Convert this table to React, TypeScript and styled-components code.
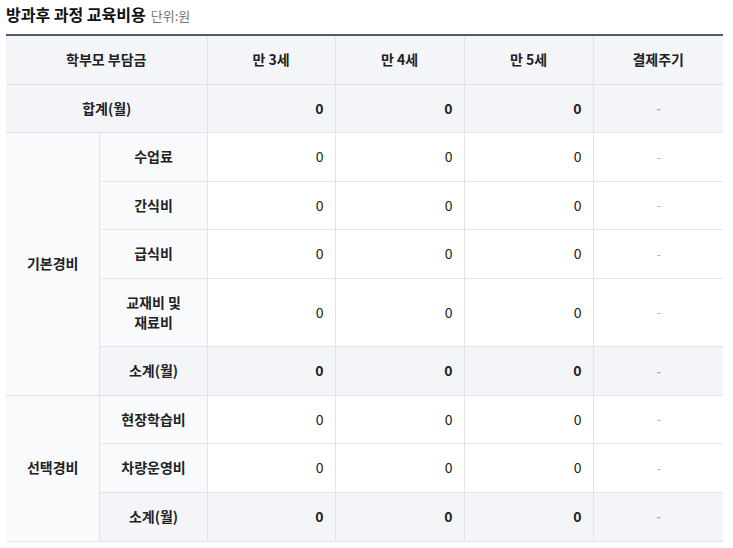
import React from "react";
import styled, { createGlobalStyle } from "styled-components";

const Global = createGlobalStyle`
  body {
    margin: 0;
    background: #fff;
    font-family: "Noto Sans CJK KR", "Noto Sans", sans-serif;
    color: #222;
  }
`;

const Wrap = styled.div`
  padding: 3px 10px 0 6px;
  width: 717px;
`;

const Title = styled.h3`
  margin: 0 0 7px;
  font-size: 16px;
  line-height: 23px;
  font-weight: 700;
  color: #111;
  display: flex;
  align-items: baseline;
  gap: 5px;
`;

const Unit = styled.span`
  font-size: 13px;
  font-weight: 400;
  color: #777;
`;

const Table = styled.table`
  width: 717px;
  border-collapse: collapse;
  table-layout: fixed;
  border-top: 2px solid #555c66;
  font-size: 14px;
  line-height: 1.4;
`;

const Th = styled.th`
  background: #f4f5f9;
  font-weight: 700;
  color: #222;
  padding: 14px 10px;
  height: 48px;
  box-sizing: border-box;
  border-bottom: 1px solid #e3e4e8;
  border-left: 1px solid #e3e4e8;
  &:first-child { border-left: none; }
`;

const Cell = styled.td<{ $variant?: "group" | "label" | "num" | "dash"; $sum?: boolean }>`
  padding: 14px 11px 14px 12px;
  border-bottom: 1px solid #e3e4e8;
  border-left: 1px solid #e3e4e8;
  background: ${(p) =>
    p.$sum ? "#f4f5f8" : p.$variant === "group" || p.$variant === "label" ? "#f9fafc" : "#fff"};
  text-align: ${(p) => (p.$variant === "num" ? "right" : "center")};
  font-weight: ${(p) =>
    p.$variant === "group" || p.$variant === "label" || p.$sum ? 700 : 400};
  color: ${(p) => (p.$variant === "dash" ? "#aaa" : "#222")};
  font-size: ${(p) => (p.$variant === "dash" ? "12px" : "14px")};
  ${(p) => (p.$variant === "group" ? "border-left: none;" : "")}
`;

type Row = { label: string; sum?: boolean };

const groups: { name: string; rows: Row[] }[] = [
  {
    name: "기본경비",
    rows: [
      { label: "수업료" },
      { label: "간식비" },
      { label: "급식비" },
      { label: "교재비 및\n재료비" },
      { label: "소계(월)", sum: true },
    ],
  },
  {
    name: "선택경비",
    rows: [
      { label: "현장학습비" },
      { label: "차량운영비" },
      { label: "소계(월)", sum: true },
    ],
  },
];

const Label = styled.span`
  display: inline-block;
  white-space: pre-line;
`;

export default function App() {
  return (
    <>
      <Global />
      <Wrap>
        <Title>
          방과후 과정 교육비용 <Unit>단위:원</Unit>
        </Title>
        <Table>
          <colgroup>
            <col style={{ width: 93 }} />
            <col style={{ width: 108 }} />
            <col style={{ width: 128 }} />
            <col style={{ width: 129 }} />
            <col style={{ width: 129 }} />
            <col style={{ width: 130 }} />
          </colgroup>
          <thead>
            <tr>
              <Th colSpan={2}>학부모 부담금</Th>
              <Th>만 3세</Th>
              <Th>만 4세</Th>
              <Th>만 5세</Th>
              <Th>결제주기</Th>
            </tr>
          </thead>
          <tbody>
            <tr>
              <Cell $variant="group" $sum colSpan={2}>
                합계(월)
              </Cell>
              <Cell $variant="num" $sum>0</Cell>
              <Cell $variant="num" $sum>0</Cell>
              <Cell $variant="num" $sum>0</Cell>
              <Cell $variant="dash" $sum>-</Cell>
            </tr>
            {groups.map((g) =>
              g.rows.map((r, i) => (
                <tr key={g.name + i}>
                  {i === 0 && (
                    <Cell $variant="group" rowSpan={g.rows.length}>
                      {g.name}
                    </Cell>
                  )}
                  <Cell $variant="label" $sum={r.sum}>
                    <Label>{r.label}</Label>
                  </Cell>
                  <Cell $variant="num" $sum={r.sum}>0</Cell>
                  <Cell $variant="num" $sum={r.sum}>0</Cell>
                  <Cell $variant="num" $sum={r.sum}>0</Cell>
                  <Cell $variant="dash" $sum={r.sum}>-</Cell>
                </tr>
              ))
            )}
          </tbody>
        </Table>
      </Wrap>
    </>
  );
}
